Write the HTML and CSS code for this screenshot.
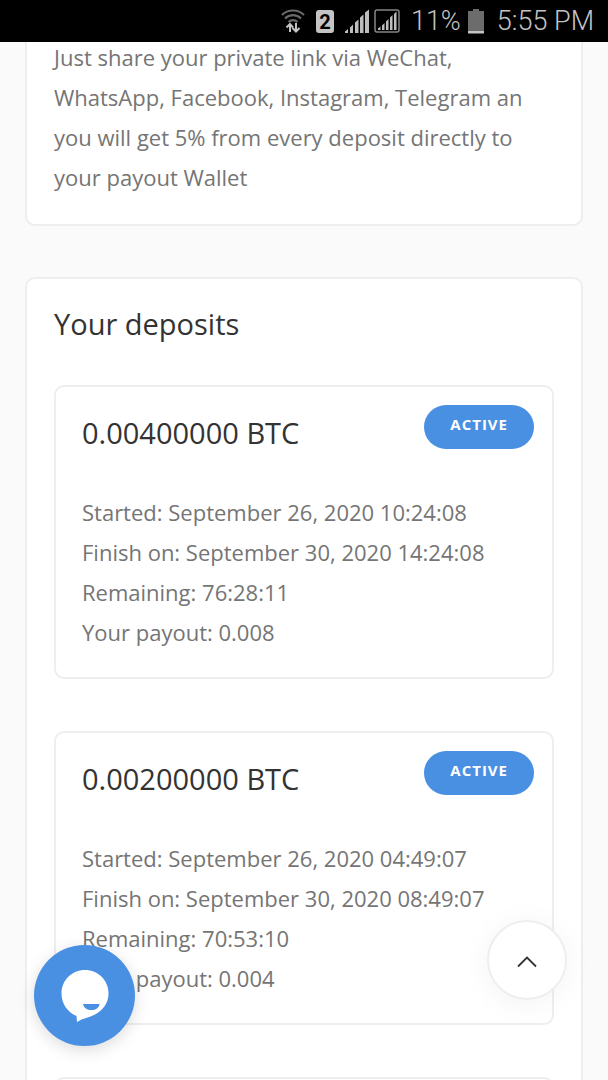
FILE: index.html
```html
<!DOCTYPE html>
<html lang="en">
<head>
    <meta charset="UTF-8">
    <meta name="viewport" content="width=device-width, initial-scale=1.0">
    <title>Your deposits</title>
    <link rel="stylesheet" href="styles.css">
</head>
<body>

    <header class="status-bar">
        <svg class="icon-wifi" width="24" height="26" viewBox="0 0 24 26" fill="none">
            <path d="M1 7C7 1 17 1 23 7M4 10.500C8.500 6 15.500 6 20 10.500M7.500 14C10 11.500 14 11.500 16.500 14" stroke="#6a6a6a" stroke-width="2.200"/>
            <path d="M9 24V16M5.500 19.500L9 16L12 19.500M15 15V23M11.500 20L15 23.500L18.500 20" stroke="#c4c4c4" stroke-width="2"/>
        </svg>
        <div class="sim">2</div>
        <svg class="icon-signal" width="24" height="24" viewBox="0 0 24 24" fill="#bdbdbd">
            <path d="M0 24V22.500L3 20V24ZM5 24V18.500L8 15.500V24ZM10 24V13.500L13.500 10.500V24ZM15 24V8.500L18.500 5.500V24ZM20 24V3.500L24 .5V24Z"/>
        </svg>
        <svg class="icon-signal-boxed" width="26" height="24" viewBox="0 0 26 24">
            <rect x="1" y="1" width="24" height="22" rx="2" fill="none" stroke="#858585" stroke-width="1.500"/>
            <path d="M4 21V19.500L6.500 17.500V21ZM8 21V16.500L10.500 14V21ZM12 21V12.500L14.500 10V21ZM16 21V8.500L18.500 6V21ZM20 21V5L22.500 2.500V21Z" fill="#bdbdbd"/>
        </svg>
        <span class="percent">11%</span>
        <svg class="icon-battery" width="18" height="26" viewBox="0 0 18 26">
            <path d="M6 1H12V3H17V23H1V3H6Z" fill="#6c6c6c"/>
            <path d="M1 23H17V25.500H1Z" fill="#c4c4c4"/>
        </svg>
        <span class="clock">5:55 PM</span>
    </header>

    <main class="page">
        <section class="panel panel-referral">
            <p>Just share your private link via WeChat, WhatsApp, Facebook, Instagram, Telegram an you will get 5% from every deposit directly to your payout Wallet</p>
        </section>

        <section class="panel">
            <h2>Your deposits</h2>

            <article class="deposit">
                <div class="deposit-head">
                    <h3>0.00400000 BTC</h3>
                    <span class="badge">ACTIVE</span>
                </div>
                <p>Started: September 26, 2020 10:24:08</p>
                <p>Finish on: September 30, 2020 14:24:08</p>
                <p>Remaining: 76:28:11</p>
                <p>Your payout: 0.008</p>
            </article>

            <article class="deposit">
                <div class="deposit-head">
                    <h3>0.00200000 BTC</h3>
                    <span class="badge">ACTIVE</span>
                </div>
                <p>Started: September 26, 2020 04:49:07</p>
                <p>Finish on: September 30, 2020 08:49:07</p>
                <p>Remaining: 70:53:10</p>
                <p>Your payout: 0.004</p>
            </article>

            <article class="deposit"></article>
        </section>
    </main>

    <button type="button" class="chat-button" aria-label="Chat">
        <svg width="48" height="54" viewBox="0 0 48 54">
            <path d="M24 1C37 1 47.500 11 47.500 24.500C47.500 34 42 41 34 45.500C28 48.500 22 49 16 53L15.500 47C7 43.500 .5 35 .5 24.500C.5 11 11 1 24 1Z" fill="#fff"/>
            <path d="M22 35H38.500C38 39 34.500 41 30.500 41C26 41 23 39 22 35Z" fill="#4a90e2"/>
        </svg>
    </button>

    <button type="button" class="top-button" aria-label="Back to top">
        <svg width="20" height="16" viewBox="0 0 20 16" fill="none">
            <path d="M1 14.500L10 5.500L19 14.500" stroke="#333" stroke-width="1.800"/>
        </svg>
    </button>

</body>
</html>
```
FILE: styles.css
```css
* {
    box-sizing: border-box;
}
body {
    margin: 0;
    height: 100vh;
    overflow: hidden;
    background-color: #fafafa;
    color: #757575;
    font-family: 'Open Sans', 'Noto Sans', sans-serif;
    font-size: 22px;
    line-height: 40px;
}
h2, h3, p {
    margin: 0;
}
h2, h3 {
    color: #333;
    font-size: 29px;
    font-weight: 400;
}

/* Status bar */
.status-bar {
    position: fixed;
    top: 0;
    left: 0;
    right: 0;
    z-index: 10;
    display: flex;
    align-items: center;
    justify-content: flex-end;
    height: 42px;
    padding-right: 14px;
    background-color: #000;
    color: #c4c4c4;
    font-family: Roboto, sans-serif;
    font-size: 27px;
    font-weight: 300;
}
.sim {
    width: 18px;
    height: 23px;
    margin: 0 11px;
    border-radius: 3px;
    background-color: #c4c4c4;
    color: #000;
    font-size: 20px;
    font-weight: 700;
    line-height: 24px;
    text-align: center;
}
.icon-signal {
    margin-right: 5px;
}
.percent {
    margin: 0 6px 0 11px;
}
.clock {
    margin-left: 12px;
}

/* Content */
.page {
    padding: 37px 25px 0;
}
.panel {
    margin-bottom: 51px;
    padding: 25px 27px 27px;
    border: 2px solid #eee;
    border-radius: 10px;
    background-color: #fff;
}
.panel-referral {
    padding-top: 0;
    border-top: 0;
    border-radius: 0 0 10px 10px;
}
.panel h2 {
    margin-bottom: 41px;
}
.deposit {
    min-height: 294px;
    margin-bottom: 52px;
    padding: 18px 18px 25px 26px;
    border: 2px solid #eee;
    border-radius: 10px;
}
.deposit-head {
    display: flex;
    align-items: flex-start;
    justify-content: space-between;
    margin-bottom: 39px;
}
.deposit-head h3 {
    padding-top: 8px;
}
.badge {
    height: 44px;
    padding: 0 26px;
    border-radius: 22px;
    background-color: #4a90e2;
    color: #fff;
    font-size: 15px;
    font-weight: 700;
    letter-spacing: 1px;
    line-height: 38px;
}

/* Floating buttons */
.chat-button,
.top-button {
    position: fixed;
    display: flex;
    align-items: center;
    justify-content: center;
    padding: 0;
    border-radius: 50%;
    cursor: pointer;
}
.chat-button {
    left: 34px;
    bottom: 34px;
    width: 101px;
    height: 101px;
    border: none;
    background-color: #4a90e2;
    box-shadow: 0 4px 16px rgba(0, 0, 0, 0.14);
}
.top-button {
    right: 41px;
    bottom: 80px;
    width: 80px;
    height: 80px;
    border: 2px solid #eee;
    background-color: #fff;
    box-shadow: 0 4px 30px rgba(0, 0, 0, 0.05);
}
```
